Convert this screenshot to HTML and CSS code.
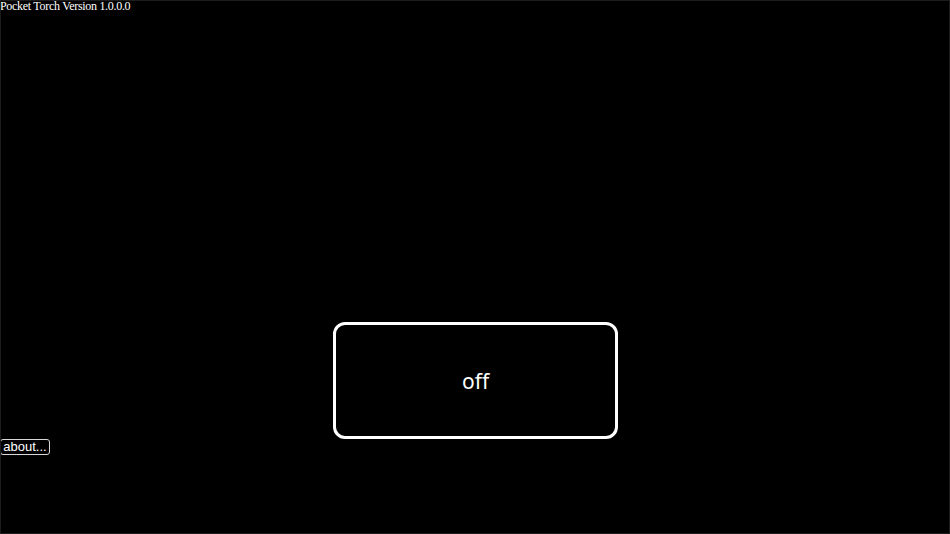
FILE: index.html
```html
<!DOCTYPE html>
<html>
<head>
<meta charset="utf-8">
<link rel="stylesheet" href="styles.css">
</head>
<body>
<div class="page">
  <div class="title">Pocket Torch Version 1.0.0.0</div>
  <div class="torch">off</div>
  <div class="about">about...</div>
</div>
</body>
</html>
```
FILE: styles.css
```css
html, body {
  margin: 0;
  padding: 0;
  background: #000;
}
.page {
  width: 950px;
  height: 534px;
  box-sizing: border-box;
  border: 1px solid #1c1c1c;
  display: flex;
  flex-direction: column;
  align-items: flex-start;
  color: #fff;
  overflow: hidden;
}
.title {
  font-family: "Liberation Serif", "Times New Roman", serif;
  font-size: 12px;
  letter-spacing: -0.3px;
  line-height: 12px;
  margin-top: -1px;
  margin-left: -1px;
  white-space: nowrap;
}
.torch {
  align-self: center;
  margin-top: 310px;
  width: 285px;
  height: 117px;
  box-sizing: border-box;
  border: 3px solid #fff;
  border-radius: 12px;
  display: flex;
  align-items: center;
  justify-content: center;
  font-family: "Noto Sans", "Open Sans", sans-serif;
  font-size: 21px;
  padding-left: 1px;
}
.about {
  margin-left: -1px;
  width: 50px;
  height: 16px;
  box-sizing: border-box;
  border: 1px solid #d8d8d8;
  border-radius: 3px;
  font-family: "Liberation Sans", Arial, sans-serif;
  font-size: 13px;
  line-height: 14px;
  text-align: center;
}
```
